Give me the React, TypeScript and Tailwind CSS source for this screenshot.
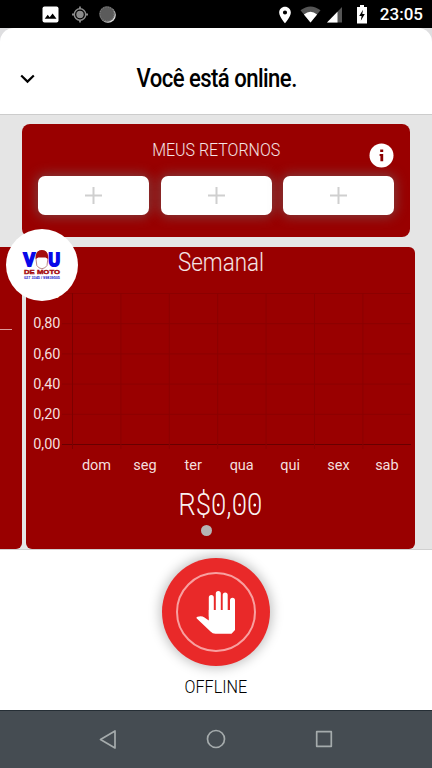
import React from 'react';
import { MdLocationOn } from 'react-icons/md';

const days = ['dom', 'seg', 'ter', 'qua', 'qui', 'sex', 'sab'];
const ticks = ['1,00', '0,80', '0,60', '0,40', '0,20', '0,00'];

function StatusBar() {
  return (
    <div className="flex h-7 shrink-0 items-center justify-between bg-black pl-[42px] pr-[9px] pt-px">
      <div className="flex items-center gap-[13px]">
        <svg width="17" height="17" viewBox="0 0 17 17">
          <rect x="0.5" y="0.5" width="16" height="16" rx="2" fill="#fff" />
          <path d="M2.7 12.7 5.7 8.8l2 2.5L10.600 7.500l3.900 5.200z" fill="#000" />
        </svg>
        <svg width="16" height="17" viewBox="0 0 16 17" fill="none" stroke="#8c8c8c">
          <circle cx="8" cy="8.500" r="5.700" strokeWidth="1.500" />
          <circle cx="8" cy="8.500" r="3.700" fill="#8c8c8c" stroke="none" />
          <path d="M8 .5v2.600M8 13.900v2.600M0 8.500h2.600M13.400 8.500h2.600" strokeWidth="1.800" />
        </svg>
        <svg className="-ml-[2px]" width="17" height="17" viewBox="0 0 17 17">
          <circle cx="9" cy="9" r="7.800" fill="#ddd" />
          <circle cx="8" cy="8" r="7.800" fill="#5b5b5b" />
          <circle cx="8" cy="8" r="7" fill="none" stroke="#888" strokeWidth="1" strokeDasharray="1 1.400" />
        </svg>
      </div>
      <div className="flex items-center text-white">
        <MdLocationOn className="mr-[5px] h-5 w-5" />
        <svg className="mr-[6px]" width="21" height="17" viewBox="0 0 21 17">
          <path d="M.5 4.200Q10.500-3.400 20.500 4.200L10.500 16.500z" fill="#555" />
          <path d="M3.900 8.400Q10.500 3.300 17.100 8.400L10.500 16.500z" fill="#fff" />
        </svg>
        <svg className="mr-[15px]" width="15" height="16" viewBox="0 0 15 16">
          <path d="M0 15.500 15 0v15.500z" fill="#555" />
          <path d="M0 15.500 10.500 4.700v10.800z" fill="#fff" />
        </svg>
        <svg className="mr-[13px]" width="10" height="19" viewBox="0 0 10 19">
          <path d="M3 0h4v2h3v16.500H0V2h3z" fill="#fff" />
          <path d="M6 4.800 2.200 11H4.600l-.8 4.700L7.800 9H5.300z" fill="#000" />
        </svg>
        <span className="font-[Roboto,sans-serif] text-[17px] font-medium leading-none">23:05</span>
      </div>
    </div>
  );
}

function Header() {
  return (
    <div className="bg-[#dedee0]">
      <div className="flex h-[87px] items-center justify-center rounded-t-[14px] border-b border-[#cccccc] bg-white pt-[15px]">
        <svg className="ml-5" width="15" height="10" viewBox="0 0 15 10" fill="none" stroke="#000" strokeWidth="2.200">
          <path d="M1.200 1.500 7.500 7.600l6.300-6.100" />
        </svg>
        <h1 className="flex flex-1 justify-center pr-[34px] text-[25px] font-medium leading-8 tracking-tight text-black">
          <span className="origin-center scale-x-[0.885] whitespace-nowrap">Você está online.</span>
        </h1>
      </div>
    </div>
  );
}

function Returns() {
  return (
    <section className="ml-[22px] mr-[22px] mt-[9px] h-[113px] rounded-lg bg-[#990000] px-4">
      <div className="relative flex h-[52px] items-center justify-center">
        <h2 className="scale-x-[0.84] whitespace-nowrap text-[19px] font-light text-white/90">MEUS RETORNOS</h2>
        <svg className="absolute right-[0.5px] top-[19px]" width="25" height="25" viewBox="0 0 25 25">
          <circle cx="12.500" cy="12.500" r="12" fill="#fff" />
          <path d="M11.200 6.400h3v2.600h-3zM10.600 11h3.600v7.200h-2.800v-5.200h-.8z" fill="#8b0000" />
        </svg>
      </div>
      <div className="grid grid-cols-3 gap-[11.5px]">
        {[0, 1, 2].map((i) => (
          <button
            key={i}
            className="flex h-[38.5px] items-center justify-center rounded-[7px] bg-white shadow-[0_0_12px_2px_rgba(110,110,110,0.55)]"
          >
            <svg width="17" height="17" viewBox="0 0 17 17" stroke="#cfcfcf" strokeWidth="2">
              <path d="M8.500 0v17M0 8.500h17" />
            </svg>
          </button>
        ))}
      </div>
    </section>
  );
}

function Chart() {
  return (
    <svg className="block overflow-visible" width="389" height="200" viewBox="0 0 389 200">
      {ticks.map((tick, i) => (
        <g key={tick}>
          <path
            d={`M36 ${12.5 + i * 30.2}H385`}
            stroke={i === 5 ? '#680000' : '#8b0000'}
            strokeWidth="1"
          />
          <text x="34.500" y={17.2 + i * 30.2} fill="#f4dede" fontSize="14.5" textAnchor="end" className="font-[Roboto,sans-serif]">
            {tick}
          </text>
        </g>
      ))}
      {days.map((day, i) => (
        <g key={day}>
          <path d={`M${46.5 + i * 48.4} 12V168`} stroke={i === 0 ? '#7c0000' : '#8b0000'} strokeWidth="1" />
          <text x={70.5 + i * 48.4} y="188.500" fill="#f4dede" fontSize="14.5" textAnchor="middle" className="font-[Roboto,sans-serif]">
            {day}
          </text>
        </g>
      ))}
    </svg>
  );
}

// the zero has a dot in its counter
function Zero() {
  return (
    <span className="relative inline-block">
      0
      <span className="absolute left-1/2 top-1/2 h-[3px] w-[3px] -translate-x-1/2 -translate-y-1/2 rounded-full bg-white" />
    </span>
  );
}

function Logo() {
  return (
    <div className="absolute left-1.5 top-[113.5px] flex h-[72px] w-[72px] items-center justify-center rounded-full bg-white">
      <svg width="40" height="29" viewBox="-1 0 40 29" className="overflow-visible font-['Liberation_Sans',sans-serif]">
        <text x="0.500" y="15.800" fontSize="19" fontWeight="700" fill="#0808e8" stroke="#0808e8" strokeWidth="2" textLength="11.5" lengthAdjust="spacingAndGlyphs">V</text>
        <text x="25.500" y="15.800" fontSize="19" fontWeight="700" fill="#0808e8" stroke="#0808e8" strokeWidth="2" textLength="11.5" lengthAdjust="spacingAndGlyphs">U</text>
        <path d="M13 9Q12.500 .5 18.900.5T24.800 9L24 15.500Q22 18.700 18.900 18.700T13.800 15.500z" fill="#fff" stroke="#a86a6a" strokeWidth=".8" />
        <path d="M12.700 9Q12.200 0 18.900 0T25.100 9L22.500 7.500h-7.200z" fill="#a50d10" />
        <text x="1" y="24.400" fontSize="6" fontWeight="700" fill="#a50d10" stroke="#a50d10" strokeWidth=".4" textLength="36" lengthAdjust="spacingAndGlyphs">DE MOTO</text>
        <text x="1" y="28.500" fontSize="3" fontWeight="700" fill="#1515c8" textLength="36" lengthAdjust="spacingAndGlyphs">027 3345 / 99839505</text>
      </svg>
    </div>
  );
}

function Earnings() {
  return (
    <div className="mt-[9.5px] flex flex-1 gap-[4.5px] overflow-hidden">
      <section className="w-[21.5px] shrink-0 rounded-r-md bg-[#990000] pt-[82px]">
        <div className="h-[1.500px] w-3 bg-[#dc9a9a]" />
      </section>
      <section className="flex w-[389px] shrink-0 flex-col items-center rounded-md bg-[#990000]">
        <h2 className="h-[34px] scale-x-[0.86] text-[26px] font-light leading-[30px] text-white/90">Semanal</h2>
        <Chart />
        <p className="mt-1 scale-x-[0.89] whitespace-nowrap text-[31px] font-light leading-10 text-white/95">
          R$<Zero />,<Zero /><Zero />
        </p>
        <span className="-ml-[28px] h-[11px] w-[11px] rounded-full bg-[#b5b5b5]" />
      </section>
    </div>
  );
}

function OfflinePanel() {
  return (
    <div className="flex h-[161px] shrink-0 flex-col items-center border-t border-[#d0d0d0] bg-white pt-2">
      <button className="flex h-[108px] w-[108px] shrink-0 items-center justify-center rounded-full bg-[#e92929] shadow-[0_0_12px_2px_rgba(0,0,0,0.25)]">
        <span className="flex h-20 w-20 items-center justify-center rounded-full border-2 border-[#f8a0a0]">
          <svg width="40" height="44" viewBox="0 0 40 44" fill="none" stroke="#fff" strokeLinecap="round" strokeLinejoin="round">
            <path d="M15.300 26V7.500M22.300 24V3.600M29.200 24V4.900M36.500 24V10.300" strokeWidth="5" />
            <path d="M12.800 20H39V40L35.500 43.800H19.500Q16.500 43.800 14.500 41.500L.8 28.500Q-.2 27.300 1.500 26.800 5.500 25.500 8.500 27.500L12.800 30.500z" fill="#fff" stroke="none" />
          </svg>
        </span>
      </button>
      <span className="mt-[7px] scale-x-[0.85] text-[19px] font-light leading-7 text-black">OFFLINE</span>
    </div>
  );
}

function NavBar() {
  return (
    <div className="flex h-[58px] shrink-0 items-center justify-center gap-[88px] border-t border-[#252e35] bg-[#454c52] pb-px">
      <svg width="20" height="20" viewBox="0 0 20 20" fill="none" stroke="#a5abac" strokeWidth="1.700" strokeLinejoin="round">
        <path d="M17 2v17L2.500 10.500z" />
      </svg>
      <svg width="20" height="20" viewBox="0 0 20 20" fill="none" stroke="#a5abac" strokeWidth="1.700">
        <circle cx="10" cy="10" r="8.500" />
      </svg>
      <svg width="20" height="20" viewBox="0 0 20 20" fill="none" stroke="#a5abac" strokeWidth="1.700" strokeLinejoin="round">
        <rect x="2.700" y="2.700" width="14.600" height="14.600" />
      </svg>
    </div>
  );
}

export default function App() {
  return (
    <div className="flex h-[768px] w-[432px] flex-col overflow-hidden bg-[#e5e5e5] font-[Roboto,sans-serif]">
      <StatusBar />
      <Header />
      <main className="relative flex min-h-0 flex-1 flex-col">
        <Returns />
        <Earnings />
        <Logo />
      </main>
      <OfflinePanel />
      <NavBar />
    </div>
  );
}
